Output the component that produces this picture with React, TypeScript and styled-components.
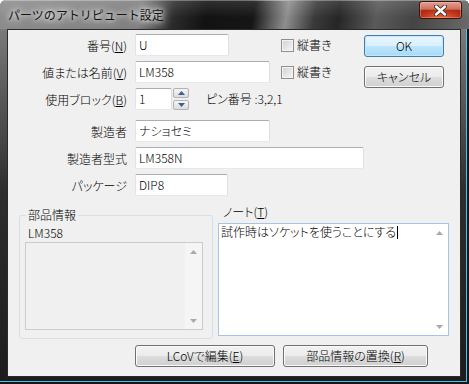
import React from 'react'
import styled, { createGlobalStyle } from 'styled-components'

const GlobalStyle = createGlobalStyle`
	html, body {
		margin: 0;
		padding: 0;
		background: #ffffff;
	}
	body {
		font-family: "Noto Sans CJK JP", "Liberation Sans", sans-serif;
		font-size: 12px;
	}
`

export default function App() {
	return (
		<>
			<GlobalStyle />
			<Window>
				<TitleBar>
					<Title>パーツのアトリピュート設定</Title>
					<CloseButton>
						<svg width="13" height="11" viewBox="0 0 13 11">
							<path d="M2 1.5 L11 9.5 M11 1.5 L2 9.5" stroke="#3a3030" strokeWidth="4.2" strokeLinecap="round" />
							<path d="M2 1.5 L11 9.5 M11 1.5 L2 9.5" stroke="#ffffff" strokeWidth="2.4" strokeLinecap="round" />
						</svg>
					</CloseButton>
				</TitleBar>
				<ClientFrame>
					<TopArea>
						<Form>
							<Row>
								<Label>番号(<Key>N</Key>)</Label>
								<FieldCell>
									<TextBox $w={94}>U</TextBox>
								</FieldCell>
								<CheckItem><CheckBox />縦書き</CheckItem>
							</Row>
							<Row>
								<Label>値または名前(<Key>V</Key>)</Label>
								<FieldCell>
									<TextBox $w={135}>LM358</TextBox>
								</FieldCell>
								<CheckItem><CheckBox />縦書き</CheckItem>
							</Row>
							<Row>
								<Label>使用ブロック(<Key>B</Key>)</Label>
								<TextBox $w={37}>1</TextBox>
								<Spin>
									<SpinButton>
										<svg width="7" height="4" viewBox="0 0 7 4"><polygon points="0,4 3.5,0 7,4" fill="#3f5f8f" /></svg>
									</SpinButton>
									<SpinButton>
										<svg width="7" height="4" viewBox="0 0 7 4"><polygon points="0,0 7,0 3.5,4" fill="#3f5f8f" /></svg>
									</SpinButton>
								</Spin>
								<PinInfo>ピン番号 :3,2,1</PinInfo>
							</Row>
							<Row $gapTop={5}>
								<Label>製造者</Label>
								<TextBox $w={135}>ナショセミ</TextBox>
							</Row>
							<Row>
								<Label>製造者型式</Label>
								<TextBox $w={229}>LM358N</TextBox>
							</Row>
							<Row>
								<Label>パッケージ</Label>
								<TextBox $w={93}>DIP8</TextBox>
							</Row>
						</Form>
						<ButtonColumn>
							<PushButton $default>OK</PushButton>
							<PushButton>キャンセル</PushButton>
						</ButtonColumn>
					</TopArea>
					<BottomArea>
						<GroupBox>
							<GroupLegend>部品情報</GroupLegend>
							<PartName>LM358</PartName>
							<ListBox>
								<Scrollbar $bg="#f5f5f5">
									<ScrollArrow>
										<svg width="7" height="4" viewBox="0 0 7 4"><polygon points="0,4 3.5,0 7,4" fill="#a9a9a9" /></svg>
									</ScrollArrow>
									<ScrollArrow>
										<svg width="7" height="4" viewBox="0 0 7 4"><polygon points="0,0 7,0 3.5,4" fill="#a9a9a9" /></svg>
									</ScrollArrow>
								</Scrollbar>
							</ListBox>
						</GroupBox>
						<NoteColumn>
							<NoteLabel>ノート(<Key>T</Key>)</NoteLabel>
							<NoteBox>
								<NoteText>試作時はソケットを使うことにする<Caret /></NoteText>
								<Scrollbar $bg="#ffffff">
									<ScrollArrow>
										<svg width="7" height="4" viewBox="0 0 7 4"><polygon points="0,4 3.5,0 7,4" fill="#a9a9a9" /></svg>
									</ScrollArrow>
									<ScrollArrow>
										<svg width="7" height="4" viewBox="0 0 7 4"><polygon points="0,0 7,0 3.5,4" fill="#a9a9a9" /></svg>
									</ScrollArrow>
								</Scrollbar>
							</NoteBox>
						</NoteColumn>
					</BottomArea>
					<BottomButtons>
						<PushButton $w={140}>LCoVで編集(<Key>E</Key>)</PushButton>
						<PushButton $w={145}>部品情報の置換(<Key>R</Key>)</PushButton>
					</BottomButtons>
				</ClientFrame>
			</Window>
		</>
	)
}

const Window = styled.div`
	width: 469px;
	height: 384px;
	box-sizing: border-box;
	display: flex;
	flex-direction: column;
	border-radius: 6px 6px 0 0;
	overflow: hidden;
	background: linear-gradient(180deg, #8a8a8a 0px, #666666 70px, #2e2e2e 190px, #1c1c1c 100%);
	box-shadow: inset -2px -2px 0 #161616, inset -3px -3px 0 #41c4ee;
`

const TitleBar = styled.div`
	flex: none;
	height: 29px;
	box-sizing: border-box;
	display: flex;
	justify-content: space-between;
	align-items: flex-start;
	padding-left: 8px;
	border-top: 1px solid rgba(255, 255, 255, 0.4);
	background:
		linear-gradient(180deg, rgba(255, 255, 255, 0.12), rgba(255, 255, 255, 0) 60%),
		linear-gradient(100deg, #8c8c8c 0%, #7e7e7e 30%, #2c2c2c 37%, #121212 44%, #161616 54%, #5e5e5e 58%, #8e8e8e 61%, #3a3a3a 67%, #262626 72%, #5a5a5a 80%, #444444 88%, #6a6a6a 100%);
`

const Title = styled.span`
	margin-top: 5px;
	font-size: 12px;
	line-height: 17px;
	color: #141414;
	text-shadow: 0 0 5px #ffffff, 0 0 9px rgba(255, 255, 255, 0.9), 0 0 14px rgba(255, 255, 255, 0.8);
`

const CloseButton = styled.div`
	width: 43px;
	height: 18px;
	margin-right: 7px;
	box-sizing: border-box;
	display: flex;
	align-items: center;
	justify-content: center;
	border: 1px solid #3d140c;
	border-radius: 3px;
	background:
		radial-gradient(ellipse 60% 55% at 50% 100%, rgba(255, 110, 60, 0.9), rgba(255, 110, 60, 0) 100%),
		linear-gradient(180deg, #e1a293 0%, #cf6f5c 45%, #b12c15 52%, #a5230e 100%);
	box-shadow: inset 0 0 0 1px rgba(255, 210, 200, 0.35);
`

const ClientFrame = styled.div`
	flex: none;
	height: 348px;
	margin: 0 8px 0 7px;
	box-sizing: border-box;
	display: flex;
	flex-direction: column;
	border: 1px solid #2a2a2a;
	background: #f0f0f0;
	color: #000000;
	font-weight: 300;
	font-feature-settings: "palt";
`

const TopArea = styled.div`
	display: flex;
	align-items: flex-start;
`

const Form = styled.div`
	flex: 1;
	display: flex;
	flex-direction: column;
	gap: 5px;
	padding-top: 4px;
`

const Row = styled.div<{ $gapTop?: number }>`
	display: flex;
	align-items: center;
	height: 22px;
	margin-top: ${p => p.$gapTop || 0}px;
`

const Label = styled.div`
	flex: none;
	width: 119px;
	margin-right: 8px;
	text-align: right;
	white-space: nowrap;
	line-height: 14px;
	padding-top: 2px;
`

const Key = styled.span`
	text-decoration: underline;
`

const FieldCell = styled.div`
	flex: none;
	width: 146px;
	display: flex;
`

const TextBox = styled.div<{ $w: number }>`
	flex: none;
	width: ${p => p.$w}px;
	height: 22px;
	box-sizing: border-box;
	padding: 3px 3px 0;
	line-height: 14px;
	white-space: nowrap;
	background: #ffffff;
	border: 1px solid;
	border-color: #abadb3 #dbdfe6 #e3e9ef #e2e3ea;
	border-radius: 2px;
`

const CheckItem = styled.div`
	display: flex;
	align-items: center;
	gap: 3px;
	line-height: 14px;
`

const CheckBox = styled.span`
	width: 13px;
	height: 13px;
	box-sizing: border-box;
	border: 1px solid #8f8f8f;
	background: linear-gradient(135deg, #cfcfcf 0%, #e6e6e6 55%, #f7f7f7 100%);
	box-shadow: inset 0 0 0 1px #f4f4f4;
`

const Spin = styled.div`
	flex: none;
	display: flex;
	flex-direction: column;
	gap: 2px;
	margin-left: 1px;
`

const SpinButton = styled.div`
	width: 16px;
	height: 10px;
	box-sizing: border-box;
	display: flex;
	align-items: center;
	justify-content: center;
	border: 1px solid #b3b3b3;
	border-radius: 2px;
	background: linear-gradient(180deg, #f6f6f6 0%, #e9e9e9 50%, #dcdcdc 100%);
`

const PinInfo = styled.div`
	margin-left: 17px;
	line-height: 14px;
	white-space: nowrap;
`

const ButtonColumn = styled.div`
	flex: none;
	width: 80px;
	margin-right: 17px;
	padding-top: 5px;
	display: flex;
	flex-direction: column;
	gap: 9px;
`

const PushButton = styled.div<{ $default?: boolean; $w?: number }>`
	width: ${p => (p.$w ? `${p.$w}px` : '100%')};
	height: 22px;
	box-sizing: border-box;
	display: flex;
	align-items: center;
	justify-content: center;
	white-space: nowrap;
	line-height: 14px;
	border: 1px solid ${p => (p.$default ? '#3c7fb1' : '#707070')};
	border-radius: 3px;
	background: ${p =>
		p.$default
			? 'linear-gradient(180deg, #eaf6fd 0%, #d9f0fc 50%, #bee6fd 51%, #a7d9f5 100%)'
			: 'linear-gradient(180deg, #f2f2f2 0%, #ebebeb 50%, #dddddd 51%, #cfcfcf 100%)'};
	box-shadow: inset 0 0 0 1px ${p => (p.$default ? '#c4e6fa' : '#fbfbfb')};
`

const BottomArea = styled.div`
	display: flex;
	align-items: flex-start;
	gap: 5px;
	margin-top: 10px;
	padding-left: 11px;
`

const GroupBox = styled.fieldset`
	flex: none;
	width: 194px;
	margin: 3px 0 0;
	min-inline-size: 0;
	box-sizing: border-box;
	padding: 5px 9px 8px 5px;
	border: 1px solid #d5dfe5;
	border-radius: 3px;
`

const GroupLegend = styled.legend`
	margin-left: 1px;
	padding: 0 2px;
	line-height: 12px;
	font-size: 12px;
`

const PartName = styled.div`
	padding-left: 3px;
	margin-bottom: 2px;
	line-height: 14px;
`

const ListBox = styled.div`
	width: 178px;
	height: 88px;
	box-sizing: border-box;
	display: flex;
	justify-content: flex-end;
	border: 1px solid #cbcbcb;
	background: #f0f0f0;
`

const Scrollbar = styled.div<{ $bg: string }>`
	flex: none;
	width: 17px;
	height: 100%;
	display: flex;
	flex-direction: column;
	justify-content: space-between;
	background: ${p => p.$bg};
`

const ScrollArrow = styled.div`
	height: 17px;
	display: flex;
	align-items: center;
	justify-content: center;
`

const NoteColumn = styled.div`
	flex: none;
	width: 231px;
	display: flex;
	flex-direction: column;
`

const NoteLabel = styled.div`
	padding-left: 5px;
	line-height: 12px;
`

const NoteBox = styled.div`
	margin-top: 5px;
	height: 113px;
	box-sizing: border-box;
	display: flex;
	border: 1px solid #a5c5e1;
	background: #ffffff;
`

const NoteText = styled.div`
	flex: 1;
	padding: 1px 2px;
	line-height: 14px;
	white-space: nowrap;
`

const Caret = styled.span`
	display: inline-block;
	width: 1px;
	height: 13px;
	margin-left: 1px;
	vertical-align: -2px;
	background: #000000;
`

const BottomButtons = styled.div`
	display: flex;
	gap: 8px;
	margin-top: 6px;
	padding-left: 127px;
`
